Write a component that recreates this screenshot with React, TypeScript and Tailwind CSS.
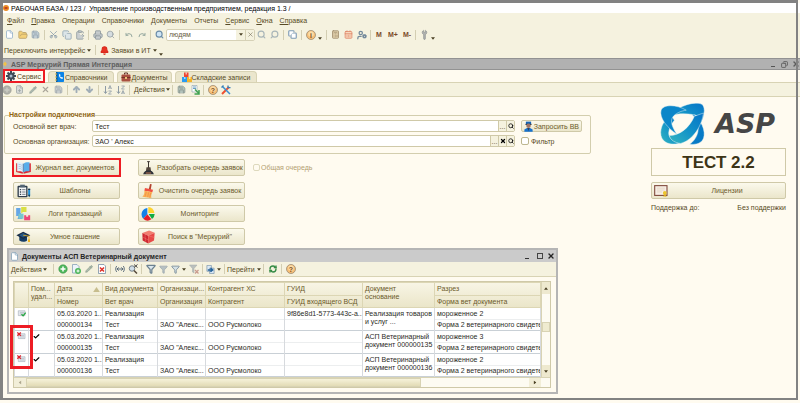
import type { ReactNode } from "react";
import {
  ArrowDown,
  ArrowUp,
  Bell,
  Calculator,
  CalendarDays,
  Check,
  ClipboardPaste,
  Copy,
  File,
  FilePlus,
  FolderOpen,
  Funnel,
  Pencil,
  Printer,
  Redo,
  RefreshCw,
  Save,
  Scissors,
  Search,
  Undo,
  UserCog,
  Wrench,
  X,
} from "lucide-react";

const menu = [
  ["Ф", "айл"],
  ["П", "равка"],
  ["", "Операции"],
  ["", "Справочники"],
  ["Д", "окументы"],
  ["", "Отчеты"],
  ["С", "ервис"],
  ["О", "кна"],
  ["Сп", "равка"],
];

const records = [
  {
    number: "000000134",
    guid: "9f86e8d1-5773-443c-a...",
    base: ["Реализация товаров", "и услуг ..."],
    section: "мороженное 2",
    marked: false,
  },
  {
    number: "000000135",
    guid: "",
    base: ["АСП Ветеринарный", "документ 000000135"],
    section: "мороженное 3",
    marked: true,
  },
  {
    number: "000000136",
    guid: "",
    base: ["АСП Ветеринарный", "документ 000000136"],
    section: "мороженное 2",
    marked: true,
  },
];

function Slot({ label, children }: { label: string; children: ReactNode }) {
  return (
    <button type="button" aria-label={label} className="flex h-3 w-[13px] shrink-0 items-center justify-center">
      {children}
    </button>
  );
}

function Sep() {
  return (
    <span className="flex h-2.5 w-[5px] shrink-0 justify-center">
      <span className="w-px bg-[#d3ceb2]" />
    </span>
  );
}

function Caret({ className = "" }: { className?: string }) {
  return (
    <svg viewBox="0 0 6 4" className={`h-[3px] w-1 shrink-0 ${className}`}>
      <path d="M0 0h6L3 4z" fill="#4a4024" />
    </svg>
  );
}

function HelpIcon({ sign }: { sign: string }) {
  return (
    <svg viewBox="0 0 20 20" className="size-2.5">
      <circle cx="10" cy="10" r="9" fill="#f7bf78" stroke="#9b8c73" strokeWidth="1.6" />
      <circle cx="10" cy="8" r="5.5" fill="#fbdca6" />
      <text x="10" y="15" textAnchor="middle" fontSize="14" fontWeight="700" fill="#7b4d1d">
        {sign}
      </text>
    </svg>
  );
}

function AddIcon({ muted = false }: { muted?: boolean }) {
  return (
    <svg viewBox="0 0 20 20" className="size-2.5">
      <circle cx="10" cy="10" r="8.5" fill={muted ? "#b0b1a9" : "#4fb75c"} stroke={muted ? "#94958d" : "#308c42"} />
      <path d="M10 5v10M5 10h10" stroke={muted ? "#c9cac2" : "#fff"} strokeWidth="3" />
    </svg>
  );
}

function SortIcon({ up = false }: { up?: boolean }) {
  return (
    <svg viewBox="0 0 20 20" className="size-2.5">
      <path d="M5 2v14M2 13l3 4 3-4" fill="none" stroke="#8d9aa4" strokeWidth="2" />
      <path
        d={up ? "M11 8l3-7 3 7M12 6h4M11 12h6l-6 6h6" : "M11 2h6l-6 6h6M11 18l3-7 3 7M12 16h4"}
        fill="none"
        stroke="#8d9aa4"
        strokeWidth="1.6"
      />
    </svg>
  );
}

function GearIcon() {
  return (
    <svg viewBox="0 0 20 20" className="size-2.5 shrink-0">
      <g stroke="#3e4a57" strokeWidth="4">
        <path d="M10 0v20M0 10h20M3 3l14 14M17 3L3 17" />
      </g>
      <circle cx="10" cy="10" r="7" fill="#3e4a57" />
      <circle cx="10" cy="10" r="3" fill="#a9bdcf" />
    </svg>
  );
}

function BookIcon() {
  return (
    <svg viewBox="0 0 20 20" className="size-2.5">
      <rect x="2" y="0" width="16" height="20" rx="1.5" fill="#0a83e8" />
      <path d="M2 0h3v20H2z" fill="#095b9f" />
      <path d="M0 4h4M0 10h4M0 16h4" stroke="#d8b648" strokeWidth="2" />
      <path d="M8 5c0 5 2 8 7 9l1-3-3-1-1 1-2-3 1-1-1-3z" fill="#fff" />
    </svg>
  );
}

function CaseIcon() {
  return (
    <svg viewBox="0 0 20 20" className="size-2.5">
      <path d="M7 5V2h6v3" fill="none" stroke="#603127" strokeWidth="2" />
      <rect x="1" y="5" width="18" height="14" rx="2" fill="#a9503f" />
      <path d="M1 11h18" stroke="#713124" strokeWidth="2" />
      <path d="M8 10h4v4H8z" fill="#e8c279" />
    </svg>
  );
}

function BoxesIcon() {
  return (
    <svg viewBox="0 0 20 20" className="size-2.5">
      <path d="M4 1h9v9H4z" fill="#ef4632" />
      <path d="M0 10h10v10H0z" fill="#2a9cf3" />
      <path d="M10 10h10v10H10z" fill="#f5b62a" />
      <path d="M7 1h3v4H7zM4 10h3v4H4zM14 10h3v4h-3z" fill="#fff" opacity=".6" />
    </svg>
  );
}

function OfficerIcon() {
  return (
    <svg viewBox="0 0 24 28" className="h-[11px] w-[9px] shrink-0">
      <path d="M5 1h14v7H5z" fill="#1464b4" />
      <path d="M4 7h16v3H4z" fill="#25303d" />
      <circle cx="12" cy="12" r="6" fill="#9c7466" />
      <path d="M1 28v-6l7-4h8l7 4v6z" fill="#1672cf" />
      <path d="M9 18h6l-3 8z" fill="#353f4d" />
    </svg>
  );
}

function JournalIcon() {
  return (
    <svg viewBox="0 0 44 36" className="h-3 w-[15px]">
      <path d="M0 4l20 2v29L0 30zM44 4L22 6v29l22-5z" fill="#dc2632" />
      <path d="M3 1c7-1 13 0 18 4v26c-5-4-11-4-18-3z" fill="#e3effa" />
      <path d="M40 1c-7-1-13 0-18 4v26c5-4 11-4 18-3z" fill="#58aeea" />
      <path d="M7 7c4 0 7 1 10 3M7 13c4 0 7 1 10 3M7 19c4 0 7 1 10 3" fill="none" stroke="#8fb8da" strokeWidth="2" />
      <path d="M21 5v26" stroke="#2374ae" strokeWidth="2" />
    </svg>
  );
}

function ClipboardIcon() {
  return (
    <svg viewBox="0 0 44 42" className="h-3.5 w-[15px]">
      <rect x="4" y="5" width="30" height="35" rx="3" fill="#2f3d4b" />
      <path d="M8 10h22v26H8z" fill="#f5f7f8" />
      <path d="M12 2h14v8H12z" fill="#536575" />
      <path d="M11 15h4v4h-4zM11 22h4v4h-4zM11 29h4v4h-4z" fill="#344351" />
      <path d="M18 17h10M18 24h10M18 31h10" stroke="#344351" strokeWidth="2" />
      <path d="M36 14h6v20l-3 6-3-6z" fill="#188fdb" />
      <path d="M36 14h6v4h-6zM36 32h6l-3 8z" fill="#253442" />
    </svg>
  );
}

function LogsIcon() {
  return (
    <svg viewBox="0 0 44 42" className="h-3.5 w-[15px]">
      <path d="M15 0h16v15H21l-6 4z" fill="#d9df45" />
      <path d="M0 3h13v15l5 5v13H4l3-9H0z" fill="#65a6e6" />
      <path d="M7 20h15v15H7z" fill="#78c7cd" />
      <path d="M24 25h6v4h6v-4h6v15H24z" fill="#ec4779" />
    </svg>
  );
}

function CapIcon() {
  return (
    <svg viewBox="0 0 44 34" className="h-[11px] w-[15px]">
      <path d="M9 16v13c8 6 17 6 24 0V16z" fill="#163d65" />
      <path d="M0 13L21 2l22 11-22 12z" fill="#192c43" />
      <path d="M8 13l13-7 13 7-13 7z" fill="#275784" />
      <path d="M21 13l18 3v15" fill="none" stroke="#eeb41d" strokeWidth="2.5" />
      <path d="M36 26h6v8h-6z" fill="#eeb41d" />
    </svg>
  );
}

function ShovelIcon() {
  return (
    <svg viewBox="0 0 32 42" className="h-3.5 w-[11px]">
      <path d="M12 2h8M16 2v24" stroke="#3b342f" strokeWidth="3" />
      <path d="M10 19h12l2 13H8z" fill="#51453d" />
      <path d="M0 40c2-8 8-12 16-12s14 4 16 12z" fill="#2d3138" />
      <path d="M8 36h16" stroke="#bd7653" strokeWidth="3" />
    </svg>
  );
}

function BroomIcon() {
  return (
    <svg viewBox="0 0 34 42" className="h-3.5 w-3">
      <path d="M23 0l5 1-3 17-6-1z" fill="#b2442f" />
      <path d="M8 12l24 5-2 8L6 20z" fill="#f05042" />
      <path d="M6 20l24 5c-3 6-4 11-3 17L0 38c5-5 7-12 6-18z" fill="#f9b254" />
      <path d="M12 23l-4 15M19 25l-3 14M25 27l-3 14" stroke="#ef7545" strokeWidth="1.5" />
    </svg>
  );
}

function PieIcon() {
  return (
    <svg viewBox="0 0 42 42" className="size-3.5">
      <path d="M19 22V3a19 19 0 0 0-12 32z" fill="#1581e8" />
      <path d="M19 22L7 35a19 19 0 0 0 24 2z" fill="#e51e27" />
      <path d="M23 21h18a19 19 0 0 1-8 15z" fill="#12ab42" />
      <path d="M22 18V0a19 19 0 0 1 18 18z" fill="#ffd32c" />
    </svg>
  );
}

function CubeIcon() {
  return (
    <svg viewBox="0 0 40 42" className="h-3.5 w-[13px]">
      <path d="M1 9L22 1l17 7-20 9z" fill="#f17d70" />
      <path d="M1 9l18 8v24L2 32z" fill="#cf2730" />
      <path d="M39 8l-20 9v24l18-9z" fill="#e84a48" />
      <path d="M9 13l2 22M19 17l20 6M2 21l17 9" stroke="#fba293" strokeWidth="1" />
    </svg>
  );
}

function LicenseIcon() {
  return (
    <svg viewBox="0 0 44 38" className="h-3 w-3.5">
      <rect x="2" y="2" width="39" height="31" fill="#f7eee5" stroke="#814b3e" strokeWidth="3.5" />
      <path d="M9 10h25M9 16h25M9 22h16" stroke="#e2d2c0" strokeWidth="2.5" />
      <circle cx="34" cy="25" r="6" fill="#edc52d" />
      <path d="M31 30l-1 8 4-2 5 2-1-8z" fill="#dba91b" />
    </svg>
  );
}

function AspLogo() {
  return (
    <svg viewBox="14 8 140 134" className="h-[42px] w-[45px] shrink-0">
      <defs>
        <linearGradient id="wave" x1="0" y1="0" x2="1" y2="1">
          <stop offset="0" stopColor="#22a9cc" />
          <stop offset=".4" stopColor="#0a7fc9" />
          <stop offset="1" stopColor="#0678c4" />
        </linearGradient>
        <linearGradient id="sea" x1="0" y1="1" x2="1" y2="0">
          <stop offset="0" stopColor="#33b5c0" />
          <stop offset=".5" stopColor="#1292c8" />
          <stop offset="1" stopColor="#0673c7" />
        </linearGradient>
      </defs>
      <g stroke="#e9f5f5" strokeWidth="1.5">
        <path d="M92 24C122 38 151 72 153 102c2 28-14 40-46 38 22-16 31-42 26-65-4-18-20-34-41-51z" fill="url(#wave)" />
        <path d="M47 48C70 14 128 2 146 12c14 12 6 45-6 63 4-18-4-27-22-30-24-4-48-4-71 3z" fill="url(#sea)" />
        <path d="M47 46C20 64 8 98 18 120c12 22 40 22 62 15-22-2-41-14-40-32 1-14 8-28 18-40z" fill="url(#sea)" />
        <path d="M16 30C8 58 40 90 66 108 52 86 44 68 52 54 60 42 78 33 96 31 64 12 24 12 16 30z" fill="#0b86c9" />
        <path d="M151 40C146 82 116 128 78 137c-18-2-32-10-36-25 32 0 64-24 80-62z" fill="url(#sea)" />
      </g>
    </svg>
  );
}

function RowStateIcon({ marked }: { marked: boolean }) {
  return (
    <svg viewBox="0 0 28 24" className="mx-auto h-2 w-[9px]">
      <path d="M4 5h21v15H4z" fill="#e7eaf0" stroke="#929ca7" strokeWidth="1.5" />
      <path d="M9 10h13M9 15h13" stroke="#a5aeb9" strokeWidth="2" />
      {marked ? (
        <path d="M1 1l11 10M12 1L1 11" stroke="#df2029" strokeWidth="4" />
      ) : (
        <path d="M14 16l5 5 8-10" fill="none" stroke="#20a63e" strokeWidth="4" />
      )}
    </svg>
  );
}

function BigButton({ icon, children }: { icon: ReactNode; children: ReactNode }) {
  return (
    <button
      type="button"
      className="flex h-[17px] w-full items-center rounded-xs border border-[#cfc9a8] bg-linear-to-b from-[#fbf9ec] to-[#ebe6cb] pl-px text-[#6b5a2b]"
    >
      <span className="flex w-4 shrink-0 justify-center">{icon}</span>
      <span className="flex-1 text-center whitespace-nowrap">{children}</span>
    </button>
  );
}

function Field({ id, label, value, clearable = false }: { id: string; label: string; value: string; clearable?: boolean }) {
  return (
    <div className="flex h-3 flex-1 items-center">
      <label htmlFor={id} className="w-[79px] shrink-0 whitespace-nowrap">
        {label}
      </label>
      <div className="flex h-3 flex-1 rounded-xs border border-[#cfc9a8] bg-white">
        <input id={id} defaultValue={value} className="min-w-0 flex-1 px-0.5 text-[#2c2918] outline-none" />
        <button type="button" aria-label="Выбрать" className="w-2 border-l border-[#cfc9a8] bg-[#f5f2df] leading-none">
          ...
        </button>
        {clearable && (
          <button type="button" aria-label="Очистить" className="flex w-2 items-center justify-center border-l border-[#cfc9a8] bg-[#f5f2df]">
            <X size={6} strokeWidth={5} className="text-black" />
          </button>
        )}
        <button type="button" aria-label="Открыть" className="flex w-2 items-center justify-center border-l border-[#cfc9a8] bg-[#f5f2df]">
          <Search size={6} strokeWidth={3} className="text-black" />
        </button>
      </div>
    </div>
  );
}

function MainToolbar() {
  return (
    <div className="flex h-[15px] items-center pl-[3px]">
      <Slot label="Новый"><File size={9} fill="#fff" className="text-[#8ba9c6]" /></Slot>
      <Slot label="Открыть"><FolderOpen size={10} fill="#f4d179" className="text-[#b9a069]" /></Slot>
      <Slot label="Сохранить"><Save size={9} fill="#c1cdd4" className="text-[#92a1ad]" /></Slot>
      <Sep />
      <Slot label="Вырезать"><Scissors size={9} className="-rotate-90 text-[#8397a7]" /></Slot>
      <Slot label="Копировать"><Copy size={10} fill="#dce5e8" className="text-[#94a7b2]" /></Slot>
      <Slot label="Вставить"><ClipboardPaste size={10} fill="#c9ced0" className="text-[#939da0]" /></Slot>
      <Sep />
      <Slot label="Печать"><Printer size={10} fill="#c7ccce" className="text-[#8b969b]" /></Slot>
      <Slot label="Просмотр"><Search size={9} fill="#d6dde0" className="text-[#929b9e]" /></Slot>
      <Sep />
      <Slot label="Отменить"><Undo size={8} strokeWidth={3} className="text-[#98aaa1]" /></Slot>
      <Slot label="Вернуть"><Redo size={8} strokeWidth={3} className="text-[#98aaa1]" /></Slot>
      <Sep />
      <Slot label="Найти"><Search size={9} strokeWidth={3} fill="#cfe5f5" className="text-[#6b8ca8]" /></Slot>
      <div className="flex h-3 w-[89px] items-center rounded-xs border border-[#d6d1b6] bg-white">
        <input aria-label="Поиск" defaultValue="людям" className="min-w-0 flex-1 px-0.5 text-[#686043] outline-none" />
        <button type="button" aria-label="История поиска" className="flex h-full w-[9px] items-center justify-center bg-[#f5f2df]">
          <Caret />
        </button>
        <button type="button" aria-label="Сбросить" className="flex h-full w-[9px] items-center justify-center border-l border-[#d6d1b6] bg-[#f5f2df]">
          <X size={7} className="text-[#77705c]" />
        </button>
      </div>
      <Slot label="Искать назад"><Search size={9} strokeWidth={3} className="text-[#a8b5b8]" /></Slot>
      <Slot label="Искать вперед"><Search size={9} strokeWidth={3} className="-scale-x-100 text-[#a8b5b8]" /></Slot>
      <Sep />
      <Slot label="Окна"><Copy size={9} strokeWidth={3} fill="#fff" className="text-[#7d9ab5]" /></Slot>
      <Sep />
      <Slot label="Справка"><HelpIcon sign="i" /></Slot>
      <Caret className="mt-2 mr-0.5 ml-px" />
      <Sep />
      <Slot label="Калькулятор"><Calculator size={9} fill="#e5d5b0" className="text-[#9a8665]" /></Slot>
      <Slot label="Календарь"><CalendarDays size={9} fill="#f8d8be" className="text-[#dd8060]" /></Slot>
      <Slot label="Пользователь"><UserCog size={10} strokeWidth={3} className="text-[#72899b]" /></Slot>
      <Sep />
      <span className="flex font-bold text-[#7b4a28]">
        <button type="button" className="w-3">M</button>
        <button type="button" className="w-4">M+</button>
        <button type="button" className="w-3">M-</button>
      </span>
      <Sep />
      <Slot label="Сервис"><Wrench size={9} fill="#b4b6b5" className="-rotate-45 text-[#8f9492]" /></Slot>
      <Caret className="mt-2" />
    </div>
  );
}

function ServiceToolbar() {
  return (
    <div className="flex h-[15px] items-center border-y border-[#d8d3b4] bg-[#f5f2df]">
      <Slot label="Добавить"><AddIcon muted /></Slot>
      <Slot label="Скопировать"><FilePlus size={9} fill="#d9dcd9" className="text-[#9ba3a2]" /></Slot>
      <Slot label="Изменить"><Pencil size={8} fill="#aab7ad" className="text-[#94a299]" /></Slot>
      <Slot label="Удалить"><X size={9} strokeWidth={3} className="text-[#aaa69a]" /></Slot>
      <Slot label="Записать"><Save size={9} fill="#c8cdce" className="text-[#a1a8ac]" /></Slot>
      <Sep />
      <Slot label="Вверх"><ArrowUp size={9} strokeWidth={5} className="text-[#a0adb7]" /></Slot>
      <Slot label="Вниз"><ArrowDown size={9} strokeWidth={5} className="text-[#a0adb7]" /></Slot>
      <Sep />
      <Slot label="По возрастанию"><SortIcon up /></Slot>
      <Slot label="По убыванию"><SortIcon /></Slot>
      <Sep />
      <button type="button" className="flex w-[38px] items-center justify-between pl-0.5">
        Действия <Caret />
      </button>
      <Sep />
      <Slot label="Выгрузить"><Save size={9} fill="#b2c2bb" className="text-[#87938c]" /></Slot>
      <Slot label="Загрузить">
        <svg viewBox="0 0 20 20" className="size-2.5">
          <path d="M4 1h10v13H4z" fill="#fff" stroke="#718d9d" />
          <path d="M6 4h6M6 7h6" stroke="#6b9fc3" strokeWidth="2" />
          <path d="M10 9l8 8M18 10v8h-9" fill="none" stroke="#3fa150" strokeWidth="3" />
        </svg>
      </Slot>
      <Sep />
      <Slot label="Помощь"><HelpIcon sign="?" /></Slot>
      <Slot label="Настройки">
        <svg viewBox="0 0 20 20" className="size-2.5">
          <path d="M2 18L16 4" stroke="#ef5130" strokeWidth="4" />
          <path d="M3 3l15 15" stroke="#3b8ed0" strokeWidth="3" />
          <path d="M1 5l4-4M14 1v4h5" fill="none" stroke="#357fb9" strokeWidth="2.5" />
        </svg>
      </Slot>
    </div>
  );
}

function ConnectionSettings() {
  return (
    <fieldset className="h-[43px] rounded-xs border border-[#d3ceae] pr-2 pl-2">
      <legend className="-ml-1 px-0 leading-2 font-bold text-[#8f6510]">Настройки подключения</legend>
      <div className="flex flex-col gap-[3px] pt-px">
        <div className="flex items-center gap-1.5">
          <Field id="vet" label="Основной вет врач:" value="Тест" />
          <button
            type="button"
            className="flex h-3 w-[61px] items-center justify-between rounded-xs border border-[#cfc9a8] bg-linear-to-b from-[#fbf9ec] to-[#ebe6cb] px-0.5 whitespace-nowrap text-[#6b5a2b]"
          >
            <OfficerIcon />
            Запросить ВВ
          </button>
        </div>
        <div className="flex items-center gap-1.5">
          <Field id="org" label="Основная организация:" value="ЗАО ' Алекс" clearable />
          <label className="flex w-[61px] items-center gap-0.5">
            <input type="checkbox" className="size-2 appearance-none rounded-xs border border-[#bdb78f] bg-white" />
            Фильтр
          </label>
        </div>
      </div>
    </fieldset>
  );
}

function Actions() {
  return (
    <div className="flex items-start gap-2 pl-[9px]">
      <div className="grid grid-cols-[107px_107px] gap-x-[18px] gap-y-1.5">
        <div className="relative">
          <BigButton icon={<JournalIcon />}>Журнал вет. документов</BigButton>
          <span className="pointer-events-none absolute -inset-px border-2 border-[#ed1c24]" />
        </div>
        <BigButton icon={<ShovelIcon />}>Разобрать очередь заявок</BigButton>
        <BigButton icon={<ClipboardIcon />}>Шаблоны</BigButton>
        <BigButton icon={<BroomIcon />}>Очистить очередь заявок</BigButton>
        <BigButton icon={<LogsIcon />}>Логи транзакций</BigButton>
        <BigButton icon={<PieIcon />}>Мониторинг</BigButton>
        <BigButton icon={<CapIcon />}>Умное гашение</BigButton>
        <BigButton icon={<CubeIcon />}>Поиск в "Меркурий"</BigButton>
      </div>
      <label className="flex h-[17px] items-center gap-px whitespace-nowrap text-[#b3a070]">
        <input type="checkbox" disabled className="size-[7px] appearance-none rounded-xs border border-[#ded9bd]" />
        Общая очередь
      </label>
    </div>
  );
}

function DocumentsToolbar() {
  return (
    <div className="flex h-[15px] items-center border-b border-[#d8d3b4] bg-[#f5f2df] pl-0.5">
      <button type="button" className="flex w-10 items-center justify-between pr-1">
        Действия <Caret />
      </button>
      <Sep />
      <Slot label="Добавить"><AddIcon /></Slot>
      <Slot label="Скопировать">
        <svg viewBox="0 0 20 20" className="size-2.5">
          <path d="M3 1h9l4 4v13H3z" fill="#edf4fb" stroke="#839db3" strokeWidth="1.5" />
          <circle cx="14" cy="14" r="6" fill="#4fb75c" />
          <path d="M14 11v6M11 14h6" stroke="#fff" strokeWidth="2" />
        </svg>
      </Slot>
      <Slot label="Изменить"><Pencil size={8} fill="#aebcb0" className="text-[#859988]" /></Slot>
      <Slot label="Пометить на удаление">
        <svg viewBox="0 0 20 20" className="size-2.5">
          <path d="M3 1h11l3 3v15H3z" fill="#fff" stroke="#718aa0" strokeWidth="1.5" />
          <path d="M6 7l8 8M14 7l-8 8" stroke="#df3028" strokeWidth="3" />
        </svg>
      </Slot>
      <Sep />
      <Slot label="Интервал">
        <svg viewBox="0 0 24 16" className="h-2 w-2.5">
          <path d="M4 1c-3 4-3 10 0 14M20 1c3 4 3 10 0 14M5 8h14M9 4L5 8l4 4M15 4l4 4-4 4" fill="none" stroke="#3d5268" strokeWidth="2" />
        </svg>
      </Slot>
      <Slot label="Найти">
        <svg viewBox="0 0 20 20" className="size-2.5">
          <circle cx="8" cy="9" r="5.5" fill="#cfdde8" stroke="#77828a" strokeWidth="2" />
          <path d="M12 13l6 6" stroke="#55483a" strokeWidth="3" />
          <path d="M12 1l7 6M19 1l-7 6" stroke="#4a4a46" strokeWidth="2" />
        </svg>
      </Slot>
      <Sep />
      <Slot label="Отбор"><Funnel size={10} strokeWidth={3} fill="#dce8ee" className="text-[#6d8291]" /></Slot>
      <Slot label="Отбор по значению"><Funnel size={9} fill="#b6c0c3" className="text-[#9da9ad]" /></Slot>
      <button type="button" aria-label="История отборов" className="flex w-[17px] items-center justify-center gap-0.5">
        <Funnel size={9} fill="#d4e0e5" className="text-[#6d8291]" />
        <Caret />
      </button>
      <Slot label="Отключить отбор">
        <svg viewBox="0 0 20 20" className="size-2.5">
          <path d="M1 2h15l-6 7v9l-3-2V9z" fill="#bbc0bd" stroke="#a2aaa9" />
          <path d="M12 12l7 7M19 12l-7 7" stroke="#c99a8d" strokeWidth="2.5" />
        </svg>
      </Slot>
      <Sep />
      <button type="button" aria-label="Ввести на основании" className="flex w-[17px] items-center justify-center gap-0.5">
        <svg viewBox="0 0 20 20" className="size-[9px]">
          <path d="M2 1h10v13H2zM8 7h10v12H8z" fill="#dce9f5" stroke="#7690a8" strokeWidth="1.5" />
          <path d="M4 11h10M10 7l5 4-5 4" fill="none" stroke="#24639b" strokeWidth="3" />
        </svg>
        <Caret />
      </button>
      <Sep />
      <button type="button" className="flex w-[34px] items-center justify-between">
        Перейти <Caret />
      </button>
      <Sep />
      <Slot label="Обновить"><RefreshCw size={8} strokeWidth={4} className="text-[#358b45]" /></Slot>
      <Sep />
      <Slot label="Помощь"><HelpIcon sign="?" /></Slot>
    </div>
  );
}

const th = "border border-[#dcd6b4] px-0.5 text-left font-normal whitespace-nowrap overflow-hidden";
const td = "border-x border-[#d7dade] px-0.5 whitespace-nowrap overflow-hidden";

function DocumentsTable() {
  return (
    <table className="w-full table-fixed border-collapse leading-2 text-[#2b2b26]">
      <colgroup>
        <col className="w-3.5" />
        <col className="w-[26px]" />
        <col className="w-12" />
        <col className="w-[55px]" />
        <col className="w-12" />
        <col className="w-[79px]" />
        <col className="w-[78px]" />
        <col className="w-[72px]" />
        <col />
      </colgroup>
      <thead className="bg-linear-to-b from-[#f8f5e5] to-[#eae5c8] text-[#6b5a2b]">
        <tr className="h-[13px]">
          <th className={th} rowSpan={2} aria-label="Состояние" />
          <th className={`${th} pt-0.5 align-top`} rowSpan={2}>
            Пом...
            <br />
            удал...
          </th>
          <th className={th}>
            <span className="flex items-center justify-between">
              Дата
              <svg viewBox="0 0 8 6" className="h-[5px] w-[7px]">
                <path d="M4 0l4 6H0z" fill="#c7bd8d" />
              </svg>
            </span>
          </th>
          <th className={th}>Вид документа</th>
          <th className={th}>Организаци...</th>
          <th className={th}>Контрагент ХС</th>
          <th className={th}>ГУИД</th>
          <th className={`${th} pt-0.5 align-top`} rowSpan={2}>
            Документ
            <br />
            основание
          </th>
          <th className={th}>Разрез</th>
        </tr>
        <tr className="h-3">
          <th className={th}>Номер</th>
          <th className={th}>Вет врач</th>
          <th className={th}>Организация</th>
          <th className={th}>Контрагент</th>
          <th className={th}>ГУИД входящего ВСД</th>
          <th className={th}>Форма вет документа</th>
        </tr>
      </thead>
      {records.map((r) => (
        <tbody key={r.number} className="border-b border-[#c9d0d6]">
          <tr className="h-3">
            <td className={`${td} px-0 pt-px align-top`} rowSpan={2}>
              <RowStateIcon marked={r.marked} />
            </td>
            <td className={`${td} pt-0.5 align-top`} rowSpan={2}>
              {r.marked && <Check size={7} strokeWidth={4} className="ml-0.5 text-black" />}
            </td>
            <td className={td}>05.03.2020 1...</td>
            <td className={td}>Реализация</td>
            <td className={td} />
            <td className={td} />
            <td className={td}>{r.guid}</td>
            <td className={`${td} pt-0.5 align-top`} rowSpan={2}>
              {r.base[0]}
              <br />
              {r.base[1]}
            </td>
            <td className={td}>{r.section}</td>
          </tr>
          <tr className="h-[11px] border-t border-[#eceeef]">
            <td className={td}>{r.number}</td>
            <td className={td}>Тест</td>
            <td className={td}>ЗАО "Алекс...</td>
            <td className={td}>ООО Русмолоко</td>
            <td className={td} />
            <td className={td}>Форма 2 ветеринарного свидетельс</td>
          </tr>
        </tbody>
      ))}
    </table>
  );
}

function DocumentsWindow() {
  return (
    <section className="mt-[3px] ml-[3px] w-[551px] border-2 border-[#b5b5b5] bg-[#fffbf0]">
      <header className="flex h-3 items-center gap-[3px] bg-[#cbcbcb] px-px text-[#252525]">
        <File size={9} fill="#fff" className="text-[#7d9db6]" />
        <h2 className="flex-1 font-bold">Документы АСП Ветеринарный документ</h2>
        <button type="button" aria-label="Свернуть" className="flex w-3 justify-center">
          <span className="mt-1 h-px w-1 bg-[#333]" />
        </button>
        <button type="button" aria-label="Развернуть" className="flex w-2 justify-center">
          <span className="size-1.5 border border-[#444]" />
        </button>
        <button type="button" aria-label="Закрыть">
          <X size={8} strokeWidth={4} />
        </button>
      </header>
      <DocumentsToolbar />
      <div className="relative mt-1 mr-[5px] mb-1 ml-1 border border-[#cfc9a8] bg-white">
        <div className="flex">
          <div className="min-w-0 flex-1 overflow-hidden">
            <DocumentsTable />
          </div>
          <div className="flex w-[9px] flex-col border-l border-[#d8d3b4] bg-[#fdfbf2]">
            <span className="flex h-3 items-center justify-center bg-[#eee9cf]">
              <Caret className="rotate-180" />
            </span>
            <span className="mt-7 h-2.5 border border-[#d8d3b4] bg-[#efebd0]" />
            <span className="mt-auto flex h-3 items-center justify-center bg-[#eee9cf]">
              <Caret />
            </span>
          </div>
        </div>
        <div className="flex h-2.5 border-t border-[#d8d3b4] bg-[#fdfbf2] pr-[9px]">
          <span className="flex w-3 items-center justify-center bg-[#f2eed8]">
            <Caret className="rotate-90 opacity-40" />
          </span>
          <span className="flex w-3/4 items-center justify-center border border-[#d8d3b4] bg-linear-to-b from-[#f6f2da] to-[#e2dbb5]" />
          <span className="ml-auto flex w-3 items-center justify-center bg-[#f2eed8]">
            <Caret className="-rotate-90" />
          </span>
        </div>
        <span className="pointer-events-none absolute top-[43px] -left-1 h-11 w-[23px] border-3 border-[#ed1c24]" />
      </div>
    </section>
  );
}

function InfoPanel() {
  return (
    <aside className="w-[135px] shrink-0 pt-1.5">
      <div className="flex h-[41px] items-center gap-2.5 pl-[9px]">
        <AspLogo />
        <span className="font-['DejaVu_Sans',sans-serif] text-[27px] leading-none font-bold text-[#464646] italic">ASP</span>
      </div>
      <div className="mt-1 flex h-7 items-center justify-center border border-[#cfc9a8] text-[17px] font-bold text-[#3d3416]">
        ТЕСТ 2.2
      </div>
      <div className="mt-1.5">
        <BigButton icon={<LicenseIcon />}>Лицензии</BigButton>
      </div>
      <div className="mt-1 flex justify-between">
        <span>Поддержка до:</span>
        <span>Без поддержки</span>
      </div>
    </aside>
  );
}

const tab = "flex h-[11px] items-center rounded-t-sm border border-b-0 border-[#d8d3b4] bg-[#ebe6cd]";

export default function App() {
  return (
    <div className="relative min-h-screen bg-[#fffbf0] pt-[3px] font-['Liberation_Sans',Arial,sans-serif] text-[7px] leading-[9px] text-[#574a25]">
      <header>
        <div className="flex h-2.5 items-center gap-0.5 bg-white pl-[3px]">
          <svg viewBox="0 0 12 12" className="size-1.5">
            <circle cx="6" cy="6" r="6" fill="#e98b25" />
            <path d="M3 6h6" stroke="#b62b1b" strokeWidth="3" />
          </svg>
          <h1 className="whitespace-pre text-black">
            РАБОЧАЯ БАЗА / 123 /  Управление производственным предприятием, редакция 1.3 /
          </h1>
        </div>
        <div className="bg-[#f5f2df]">
          <nav className="flex h-3.5 items-center gap-[7px] pl-[7px]">
            {menu.map(([key, rest]) => (
              <button type="button" key={rest + key}>
                <u>{key}</u>
                {rest}
              </button>
            ))}
          </nav>
          <MainToolbar />
          <div className="flex h-4 items-center gap-0.5 pl-1">
            <button type="button" className="flex items-center gap-0.5">
              Переключить интерфейс <Caret />
            </button>
            <Sep />
            <button type="button" className="flex items-center gap-0.5">
              <Bell size={9} strokeWidth={3} fill="#e83224" className="text-[#d92a1d]" />
              Заявки в ИТ <Caret />
            </button>
            <Caret className="mt-2" />
          </div>
        </div>
        <div className="flex h-3 items-center gap-1 border-y border-[#929292] bg-[#b1b1b1] pl-[3px] text-[#5e5e5e]">
          <svg viewBox="0 0 8 10" className="h-2 w-1">
            <path d="M4 0l4 5-4 5-4-5z" fill="#efc14a" />
          </svg>
          <h2 className="flex-1 font-bold">ASP Меркурий Прямая Интеграция</h2>
          <button type="button" aria-label="Свернуть" className="flex w-2 justify-center">
            <span className="mt-1 h-px w-1 bg-[#555]" />
          </button>
          <button type="button" aria-label="Восстановить"><Copy size={7} strokeWidth={3} className="-scale-x-100" /></button>
          <button type="button" aria-label="Закрыть"><X size={8} strokeWidth={4} /></button>
        </div>
      </header>

      <div className="flex h-3 items-end gap-[3px] pl-[3px]" role="tablist">
        <button type="button" role="tab" aria-selected className="relative flex h-3 w-[42px] items-center gap-px pl-[3px]">
          <GearIcon />
          Сервис
          <span className="pointer-events-none absolute inset-x-0 -top-px -bottom-px border-2 border-[#ed1c24]" />
        </button>
        <button type="button" role="tab" className={`${tab} px-1.5`}>
          <BookIcon />
          Справочники
        </button>
        <button type="button" role="tab" className={`${tab} px-[3px]`}>
          <CaseIcon />
          Документы
        </button>
        <button type="button" role="tab" className={`${tab} px-1.5`}>
          <BoxesIcon />
          Складские записи
        </button>
      </div>
      <ServiceToolbar />

      <main className="flex items-start justify-between pr-3.5 pl-1">
        <div className="w-[587px] pt-3.5">
          <ConnectionSettings />
          <div className="mt-[5px]">
            <Actions />
          </div>
          <DocumentsWindow />
        </div>
        <InfoPanel />
      </main>

      <div className="pointer-events-none absolute top-0 right-0.5 bottom-[3px] left-0 border-2 border-t-3 border-l-3 border-[#828282]" />
    </div>
  );
}
